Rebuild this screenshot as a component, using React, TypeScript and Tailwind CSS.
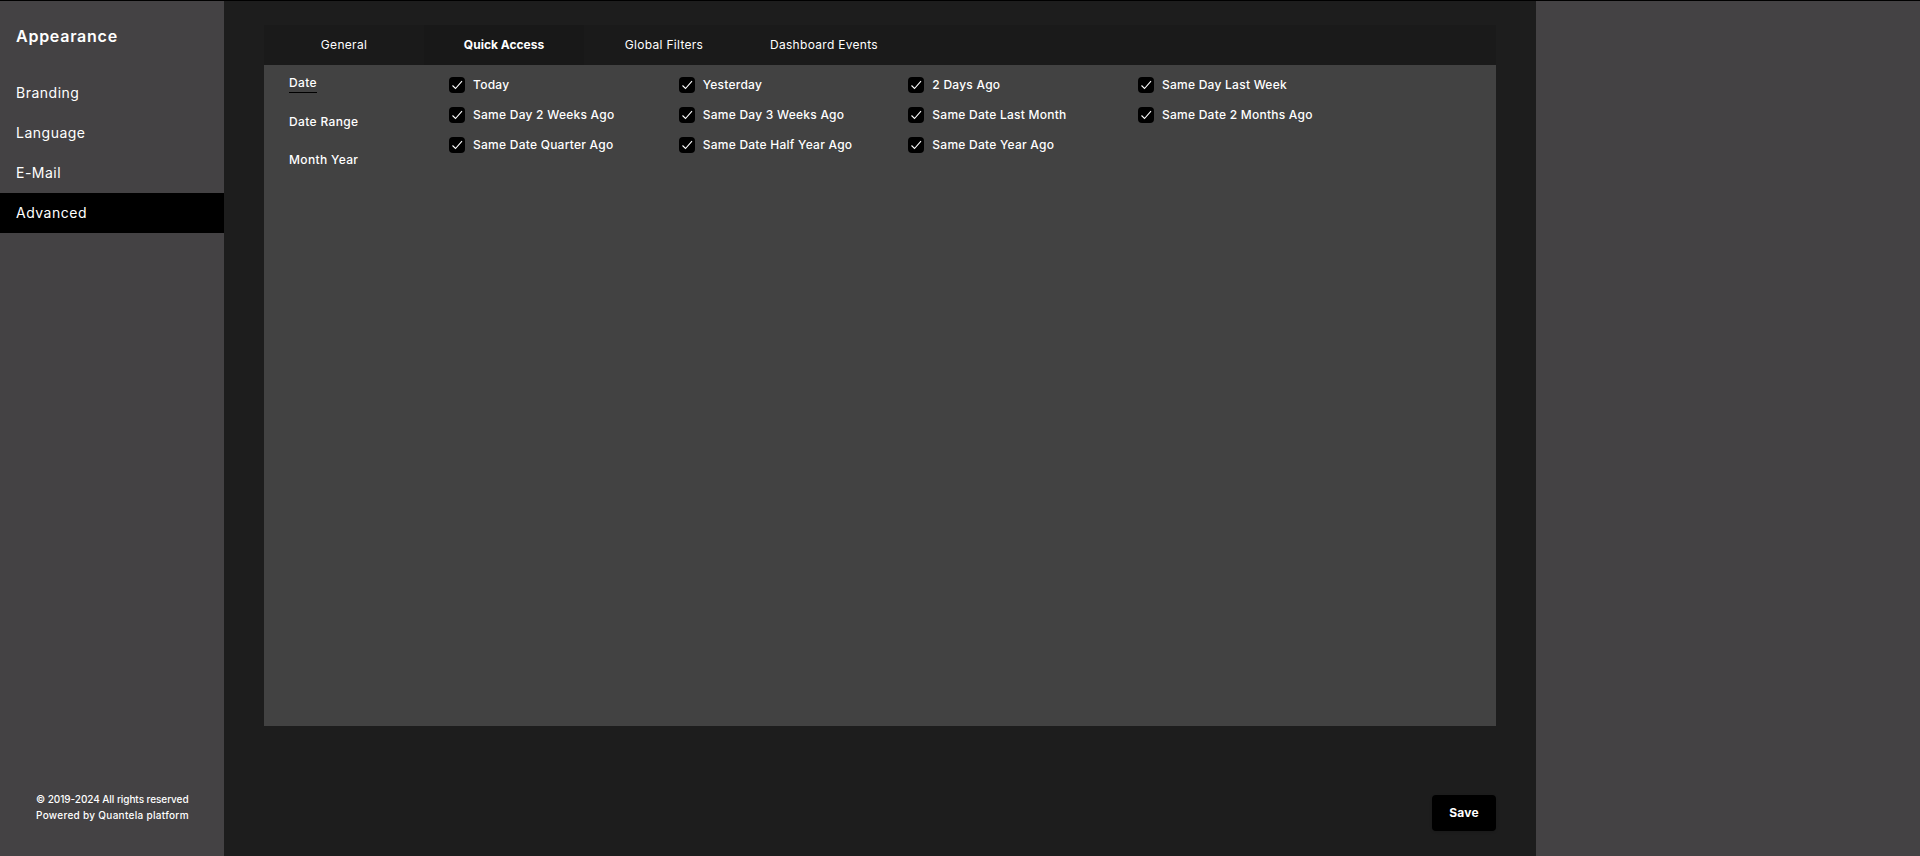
const font = "font-['Inter','Liberation_Sans',sans-serif]";

const menuItems = ["Branding", "Language", "E-Mail", "Advanced"];
const tabs = ["General", "Quick Access", "Global Filters", "Dashboard Events"];
const subMenu = ["Date", "Date Range", "Month Year"];
const options = [
  "Today",
  "Yesterday",
  "2 Days Ago",
  "Same Day Last Week",
  "Same Day 2 Weeks Ago",
  "Same Day 3 Weeks Ago",
  "Same Date Last Month",
  "Same Date 2 Months Ago",
  "Same Date Quarter Ago",
  "Same Date Half Year Ago",
  "Same Date Year Ago",
];

function CheckBox() {
  return (
    <span className="flex h-4 w-4 shrink-0 items-center justify-center rounded bg-black">
      <svg width="16" height="16" viewBox="0 0 16 16" fill="none">
        <path d="M3.5 8.5 L6.5 11.5 L13 4.2" stroke="#fff" strokeWidth="1.1" />
      </svg>
    </span>
  );
}

export default function App() {
  return (
    <div className={`flex h-[856px] w-[1920px] overflow-hidden border-t border-black bg-[#444244] text-white ${font}`}>
      {/* sidebar */}
      <aside className="flex w-[224px] flex-col bg-[#444244]">
        <h1 className="mt-[25px] pl-4 text-base leading-5 font-semibold tracking-[0.75px]">Appearance</h1>
        <nav className="mt-[27px] flex flex-col">
          {menuItems.map((item) => (
            <div
              key={item}
              className={`flex h-10 items-center pl-4 text-sm tracking-[0.5px] ${item === "Advanced" ? "bg-black" : ""}`}
            >
              {item}
            </div>
          ))}
        </nav>
        <div className="mt-auto mb-[33px] pl-9 text-[10px] leading-4 font-medium">
          <p className="tracking-[-0.06px]">© 2019-2024 All rights reserved</p>
          <p className="tracking-[0.3px]">Powered by Quantela platform</p>
        </div>
      </aside>

      {/* main */}
      <main className="flex w-[1312px] flex-col bg-[#1d1d1d] px-10 pt-6">
        <div className="flex h-10 bg-[#1a1a1a]">
          {tabs.map((tab) => (
            <div
              key={tab}
              className={`flex w-40 items-center justify-center text-xs ${tab === "Quick Access" ? "bg-[#181818] font-bold" : "tracking-[0.3px]"}`}
            >
              {tab}
            </div>
          ))}
        </div>
        <div className="flex h-[661px] bg-[#424242] pt-[9px] pl-[25px]">
          <div className="flex w-[160px] flex-col items-start gap-[19px]">
            {subMenu.map((item) => (
              <div
                key={item}
                className={`h-[19px] text-xs leading-[18px] font-medium tracking-[0.35px] ${item === "Date" ? "mb-px border-b border-black" : ""}`}
              >
                {item}
              </div>
            ))}
          </div>
          <div className="grid grid-cols-[repeat(4,229.67px)] content-start gap-y-[14px] pt-[3px]">
            {options.map((label) => (
              <label key={label} className="flex h-4 items-center gap-2 text-xs font-medium tracking-[0.25px]">
                <CheckBox />
                {label}
              </label>
            ))}
          </div>
        </div>
        <button className="mt-[69px] h-9 w-16 self-end rounded bg-black text-xs font-bold tracking-[0.2px] shadow-sm">Save</button>
      </main>

      <div className="flex-1 bg-[#444244]" />
    </div>
  );
}
